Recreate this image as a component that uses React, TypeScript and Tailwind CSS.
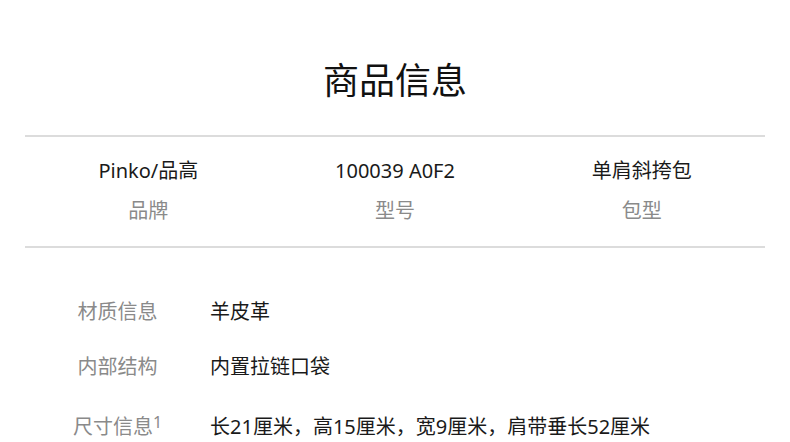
const FONT = "font-['Noto_Sans','Noto_Sans_CJK_SC',sans-serif]";

const SUMMARY = [
  { value: "Pinko/品高", label: "品牌" },
  { value: "100039 A0F2", label: "型号" },
  { value: "单肩斜挎包", label: "包型" },
];

const DETAILS = [
  { label: "材质信息", value: "羊皮革", sup: "", gap: "mt-[49px]" },
  { label: "内部结构", value: "内置拉链口袋", sup: "", gap: "mt-[25px]" },
  { label: "尺寸信息", value: "长21厘米，高15厘米，宽9厘米，肩带垂长52厘米", sup: "1", gap: "mt-[30px]" },
];

export default function App() {
  return (
    <div className={`w-[790px] h-[442px] overflow-hidden bg-white px-[25px] ${FONT}`}>
      {/* Title */}
      <h2 className="pt-[48px] h-[108px] text-center text-[36px] leading-[60px] text-[#111] font-['Noto_Sans_CJK_SC',sans-serif]">商品信息</h2>

      {/* Summary */}
      <div className="mt-[27px] border-y-2 border-[#dcdcdc] grid grid-cols-3 pt-[20px] pb-[21px]">
        {SUMMARY.map((s) => (
          <div key={s.label} className="flex flex-col items-center">
            <span className="text-[20px] leading-[28px] text-[#1a1a1a]">{s.value}</span>
            <span className="mt-[12px] text-[20px] leading-[28px] text-[#8a8a8a]">{s.label}</span>
          </div>
        ))}
      </div>

      {/* Details */}
      <div>
        {DETAILS.map((d) => (
          <div key={d.label} className={`flex items-center h-[30px] ${d.gap}`}>
            <div className="w-[185px] text-center text-[20px] leading-[30px] text-[#8a8a8a]">
              {d.label}
              {d.sup && <sup className="text-[16px] relative -top-[6px]">{d.sup}</sup>}
            </div>
            <div className="text-[20px] leading-[30px] text-[#1a1a1a]">{d.value}</div>
          </div>
        ))}
      </div>
    </div>
  );
}
